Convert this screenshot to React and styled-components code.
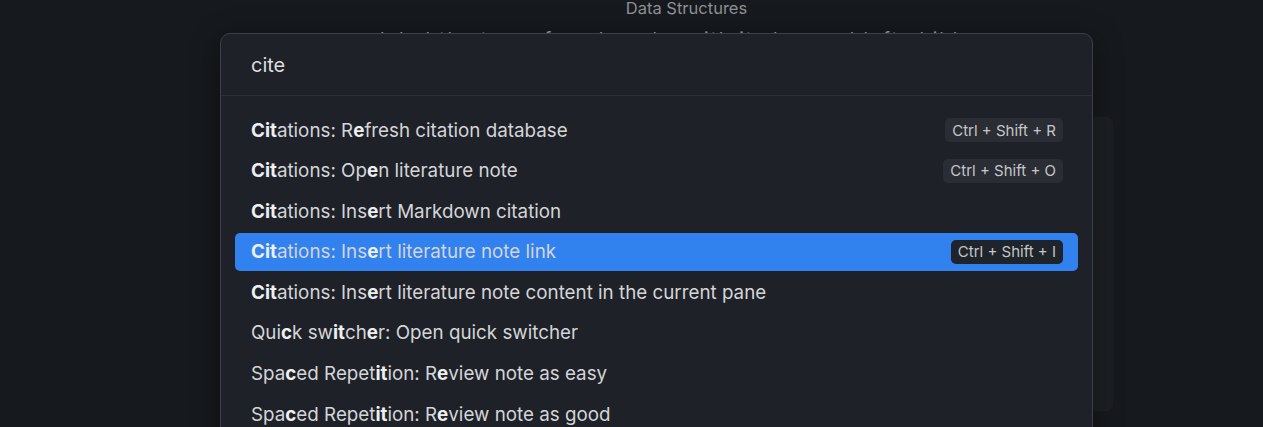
import React from "react"
import styled, { createGlobalStyle } from "styled-components"

const Global = createGlobalStyle`
    html, body {
        margin: 0;
        padding: 0;
        background: #16191d;
    }
    body {
        font-family: Inter, "Noto Sans", sans-serif;
        -webkit-font-smoothing: antialiased;
    }
`

const Page = styled.div`
    position: relative;
    width: 1263px;
    height: 427px;
    overflow: hidden;
    background: #16191d;
`
const Column = styled.div`
    margin-left: 260px;
    width: 853px;
    display: flex;
    flex-direction: column;
`
const Title = styled.div`
    text-align: center;
    font-size: 16.5px;
    line-height: 16px;
    color: #8e9094;
`
const Paragraph = styled.div`
    margin-top: 12px;
    padding-left: 120px;
    font-size: 18.8px;
    line-height: 24px;
    letter-spacing: 2px;
    color: #9a9b9e;
    white-space: nowrap;
`
const Card = styled.div`
    margin-top: 65px;
    height: 294px;
    border-radius: 6px;
    background: #1d1f23;
`

const Modal = styled.div`
    position: absolute;
    left: 220px;
    top: 33px;
    width: 871px;
    height: 420px;
    border: 1px solid #3c3f45;
    border-radius: 10px;
    background: #1e2128;
    box-shadow: 0 6px 30px rgba(0, 0, 0, 0.35);
`
const Search = styled.div`
    height: 61px;
    display: flex;
    align-items: center;
    padding: 0 30px;
    border-bottom: 1px solid #2b2e34;
    font-size: 20px;
    color: #dcdddf;
`
const List = styled.div`
    display: flex;
    flex-direction: column;
    gap: 2.6px;
    padding: 15px 14px 0;
`
const Item = styled.div`
    height: 38px;
    display: flex;
    align-items: center;
    justify-content: space-between;
    padding: 0 15px 0 16px;
    border-radius: 5px;
    font-size: 18.8px;
    color: #d4d5d8;
    background: ${(p) => (p.$active ? "#3181ef" : "transparent")};
    white-space: nowrap;
`
const Match = styled.b`
    font-weight: 700;
    color: #eeeff1;
`
const Keys = styled.span`
    height: 24px;
    display: flex;
    align-items: center;
    padding: 0 7px;
    border-radius: 5px;
    font-size: 15px;
    color: #c4c6ca;
    background: ${(p) => (p.$active ? "#1f232a" : "#2a2d34")};
`

const items = [
    { parts: ["*Ci", "*t", "ations: R", "*e", "fresh citation database"], keys: "Ctrl + Shift + R" },
    { parts: ["*Ci", "*t", "ations: Op", "*e", "n literature note"], keys: "Ctrl + Shift + O" },
    { parts: ["*Ci", "*t", "ations: Ins", "*e", "rt Markdown citation"] },
    { parts: ["*Ci", "*t", "ations: Ins", "*e", "rt literature note link"], keys: "Ctrl + Shift + I", active: true },
    { parts: ["*Ci", "*t", "ations: Ins", "*e", "rt literature note content in the current pane"] },
    { parts: ["Qui", "*c", "k sw", "*it", "ch", "*e", "r: Open quick switcher"] },
    { parts: ["Spa", "*c", "ed Repet", "*it", "ion: R", "*e", "view note as easy"] },
    { parts: ["Spa", "*c", "ed Repet", "*it", "ion: R", "*e", "view note as good"] },
]

function Label({ parts }) {
    return (
        <span>
            {parts.map((part, i) =>
                part.startsWith("*") ? <Match key={i}>{part.slice(1)}</Match> : <span key={i}>{part}</span>
            )}
        </span>
    )
}

export default function App() {
    return (
        <Page>
            <Global />
            <Column>
                <Title>Data Structures</Title>
                <Paragraph>
                    label the tree of each node, with its key and left child
                </Paragraph>
                <Card />
            </Column>
            <Modal>
                <Search>cite</Search>
                <List>
                    {items.map((item, i) => (
                        <Item key={i} $active={item.active}>
                            <Label parts={item.parts} />
                            {item.keys && <Keys $active={item.active}>{item.keys}</Keys>}
                        </Item>
                    ))}
                </List>
            </Modal>
        </Page>
    )
}
